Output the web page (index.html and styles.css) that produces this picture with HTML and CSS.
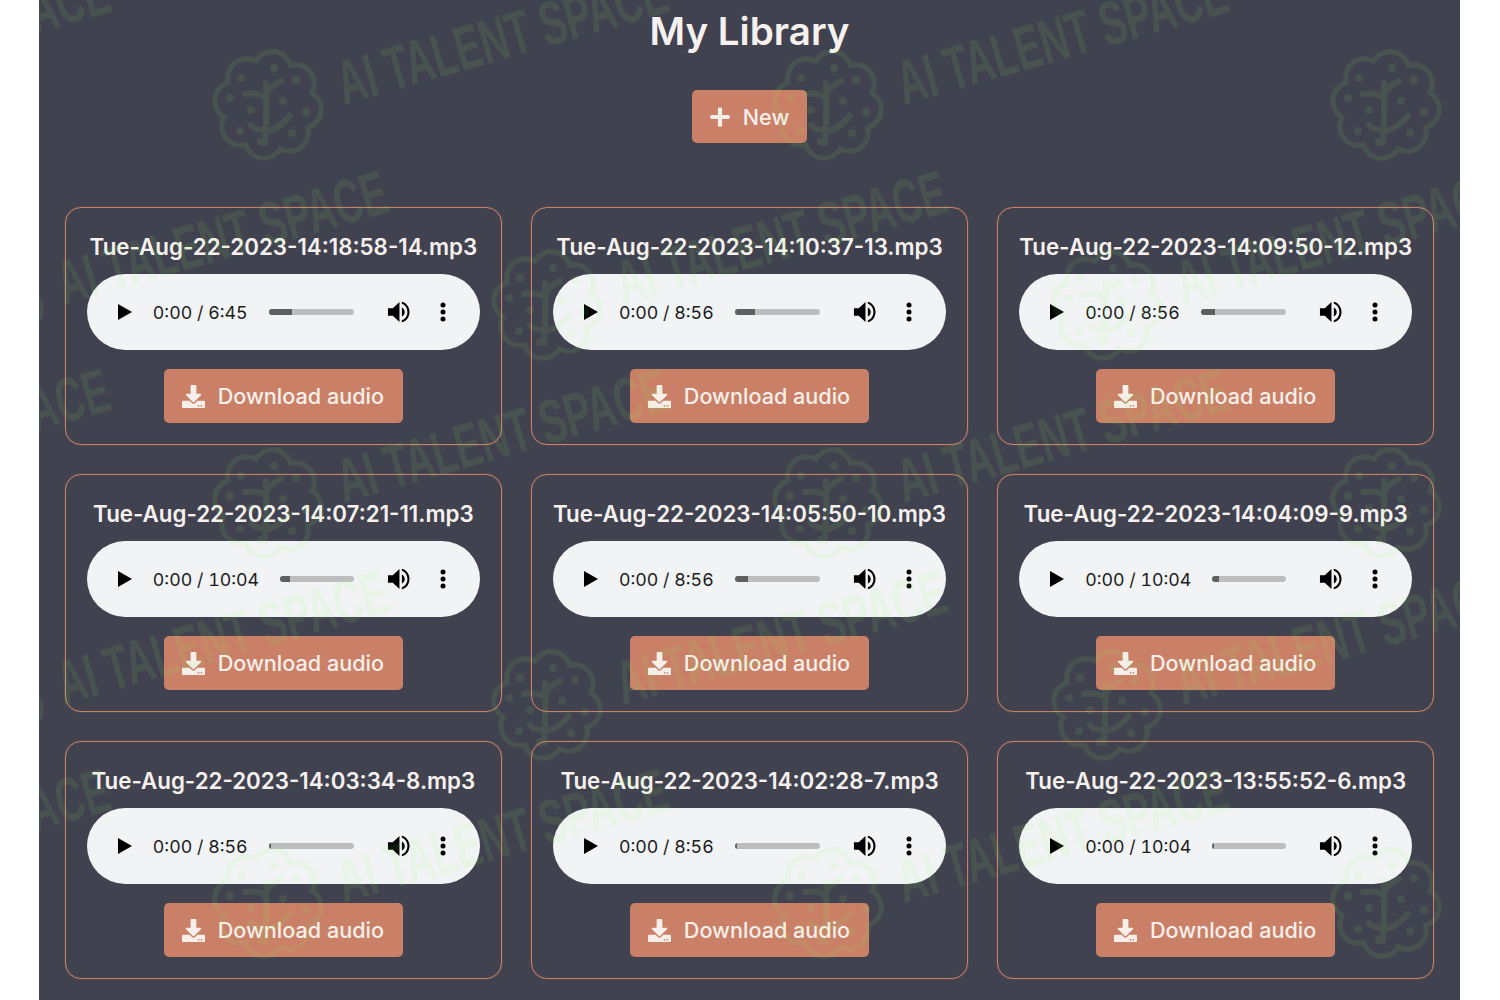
FILE: index.html
```html
<!DOCTYPE html>
<html lang="en">
  <head>
    <meta charset="UTF-8" />
    <meta name="viewport" content="width=device-width, initial-scale=1.0" />
    <title>My Library</title>
    <link rel="stylesheet" href="styles.css">
  </head>

  <body>
    <svg width="0" height="0" class="icon-defs" aria-hidden="true">
      <symbol id="i-play" viewBox="0 0 14 16"><path d="M0 0L14 8L0 16Z" /></symbol>
      <symbol id="i-volume" viewBox="0 0 24 24"><path d="M1 8H6L13 1.5V22.5L6 16H1Z" /><path d="M15.5 7.2C17.4 8.2 18.5 10 18.5 12C18.5 14 17.4 15.8 15.5 16.800Z" /><path d="M15.500 1.200C20.300 2.300 23.500 6.800 23.500 12C23.500 17.200 20.300 21.700 15.500 22.800V20.500C19 19.500 21.300 16 21.300 12C21.300 8 19 4.500 15.500 3.500Z" /></symbol>
      <symbol id="i-dots" viewBox="0 0 6 20"><circle cx="3" cy="3" r="2.500" /><circle cx="3" cy="10" r="2.500" /><circle cx="3" cy="17" r="2.500" /></symbol>
      <symbol id="i-download" viewBox="0 0 512 512"><path d="M216 0h80c13.3 0 24 10.7 24 24v168h87.700c17.800 0 26.700 21.500 14.100 34.100L269.700 378.300c-7.500 7.500-19.800 7.500-27.300 0L90.100 226.100c-12.600-12.600-3.700-34.100 14.100-34.100H192V24c0-13.300 10.700-24 24-24zm296 376v112c0 13.300-10.700 24-24 24H24c-13.300 0-24-10.700-24-24V376c0-13.300 10.700-24 24-24h146.700l49 49c20.100 20.100 52.500 20.100 72.600 0l49-49H488c13.300 0 24 10.700 24 24zm-124 88c0-11-9-20-20-20s-20 9-20 20 9 20 20 20 20-9 20-20zm64 0c0-11-9-20-20-20s-20 9-20 20 9 20 20 20 20-9 20-20z" /></symbol>
      <symbol id="i-plus" viewBox="0 0 448 512"><path d="M416 208H272V64c0-17.670-14.330-32-32-32h-32c-17.670 0-32 14.330-32 32v144H32c-17.670 0-32 14.330-32 32v32c0 17.670 14.330 32 32 32h144v144c0 17.670 14.330 32 32 32h32c17.670 0 32-14.330 32-32V304h144c17.670 0 32-14.330 32-32v-32c0-17.670-14.330-32-32-32z" /></symbol>
    </svg>

    <main class="library">
      <h1>My Library</h1>
      <button class="btn btn-new"><svg class="icon-plus"><use href="#i-plus" /></svg>New</button>

      <div class="track-grid">
        <div class="track">
          <p class="track-name">Tue-Aug-22-2023-14:18:58-14.mp3</p>
          <div class="player">
            <svg class="icon-play"><use href="#i-play" /></svg>
            <span class="time">0:00 / 6:45</span>
            <div class="bar"><div class="bar-fill" style="width: 23px"></div></div>
            <svg class="icon-volume"><use href="#i-volume" /></svg>
            <svg class="icon-dots"><use href="#i-dots" /></svg>
          </div>
          <button class="btn"><svg class="icon-download"><use href="#i-download" /></svg>Download audio</button>
        </div>
        <div class="track">
          <p class="track-name">Tue-Aug-22-2023-14:10:37-13.mp3</p>
          <div class="player">
            <svg class="icon-play"><use href="#i-play" /></svg>
            <span class="time">0:00 / 8:56</span>
            <div class="bar"><div class="bar-fill" style="width: 20px"></div></div>
            <svg class="icon-volume"><use href="#i-volume" /></svg>
            <svg class="icon-dots"><use href="#i-dots" /></svg>
          </div>
          <button class="btn"><svg class="icon-download"><use href="#i-download" /></svg>Download audio</button>
        </div>
        <div class="track">
          <p class="track-name">Tue-Aug-22-2023-14:09:50-12.mp3</p>
          <div class="player">
            <svg class="icon-play"><use href="#i-play" /></svg>
            <span class="time">0:00 / 8:56</span>
            <div class="bar"><div class="bar-fill" style="width: 14px"></div></div>
            <svg class="icon-volume"><use href="#i-volume" /></svg>
            <svg class="icon-dots"><use href="#i-dots" /></svg>
          </div>
          <button class="btn"><svg class="icon-download"><use href="#i-download" /></svg>Download audio</button>
        </div>
        <div class="track">
          <p class="track-name">Tue-Aug-22-2023-14:07:21-11.mp3</p>
          <div class="player">
            <svg class="icon-play"><use href="#i-play" /></svg>
            <span class="time">0:00 / 10:04</span>
            <div class="bar"><div class="bar-fill" style="width: 10px"></div></div>
            <svg class="icon-volume"><use href="#i-volume" /></svg>
            <svg class="icon-dots"><use href="#i-dots" /></svg>
          </div>
          <button class="btn"><svg class="icon-download"><use href="#i-download" /></svg>Download audio</button>
        </div>
        <div class="track">
          <p class="track-name">Tue-Aug-22-2023-14:05:50-10.mp3</p>
          <div class="player">
            <svg class="icon-play"><use href="#i-play" /></svg>
            <span class="time">0:00 / 8:56</span>
            <div class="bar"><div class="bar-fill" style="width: 13px"></div></div>
            <svg class="icon-volume"><use href="#i-volume" /></svg>
            <svg class="icon-dots"><use href="#i-dots" /></svg>
          </div>
          <button class="btn"><svg class="icon-download"><use href="#i-download" /></svg>Download audio</button>
        </div>
        <div class="track">
          <p class="track-name">Tue-Aug-22-2023-14:04:09-9.mp3</p>
          <div class="player">
            <svg class="icon-play"><use href="#i-play" /></svg>
            <span class="time">0:00 / 10:04</span>
            <div class="bar"><div class="bar-fill" style="width: 7px"></div></div>
            <svg class="icon-volume"><use href="#i-volume" /></svg>
            <svg class="icon-dots"><use href="#i-dots" /></svg>
          </div>
          <button class="btn"><svg class="icon-download"><use href="#i-download" /></svg>Download audio</button>
        </div>
        <div class="track">
          <p class="track-name">Tue-Aug-22-2023-14:03:34-8.mp3</p>
          <div class="player">
            <svg class="icon-play"><use href="#i-play" /></svg>
            <span class="time">0:00 / 8:56</span>
            <div class="bar"><div class="bar-fill" style="width: 2px"></div></div>
            <svg class="icon-volume"><use href="#i-volume" /></svg>
            <svg class="icon-dots"><use href="#i-dots" /></svg>
          </div>
          <button class="btn"><svg class="icon-download"><use href="#i-download" /></svg>Download audio</button>
        </div>
        <div class="track">
          <p class="track-name">Tue-Aug-22-2023-14:02:28-7.mp3</p>
          <div class="player">
            <svg class="icon-play"><use href="#i-play" /></svg>
            <span class="time">0:00 / 8:56</span>
            <div class="bar"><div class="bar-fill" style="width: 2px"></div></div>
            <svg class="icon-volume"><use href="#i-volume" /></svg>
            <svg class="icon-dots"><use href="#i-dots" /></svg>
          </div>
          <button class="btn"><svg class="icon-download"><use href="#i-download" /></svg>Download audio</button>
        </div>
        <div class="track">
          <p class="track-name">Tue-Aug-22-2023-13:55:52-6.mp3</p>
          <div class="player">
            <svg class="icon-play"><use href="#i-play" /></svg>
            <span class="time">0:00 / 10:04</span>
            <div class="bar"><div class="bar-fill" style="width: 2px"></div></div>
            <svg class="icon-volume"><use href="#i-volume" /></svg>
            <svg class="icon-dots"><use href="#i-dots" /></svg>
          </div>
          <button class="btn"><svg class="icon-download"><use href="#i-download" /></svg>Download audio</button>
        </div>
      </div>

      <!-- watermark sits over everything, staggered every other row -->
      <svg class="watermark" viewBox="39 0 1421 1000" aria-hidden="true">
        <defs>
          <g id="mark">
            <path class="mark-line" d="M22.400 -39.700A19 19 0 0 1 43.900 -12.200A19 19 0 0 1 39.700 22.400A19 19 0 0 1 12.200 43.900A19 19 0 0 1 -22.400 39.700A19 19 0 0 1 -43.900 12.200A19 19 0 0 1 -39.700 -22.400A19 19 0 0 1 -12.200 -43.900A19 19 0 0 1 22.400 -39.700Z" />
            <path class="mark-trunk" d="M-3 38C-2 20 -1 0 -2 -22M-2 -7C-8 -12 -16 -12 -23 -11M-2 -11C1 -17 6 -21 13 -24M-3 24C-8 26 -14 24 -17 20M-3 26C5 26 14 20 22 11" />
            <circle cx="-27" cy="-27" r="4" /><circle cx="6" cy="-37" r="4" /><circle cx="28" cy="-25" r="4" />
            <circle cx="-38" cy="-7" r="4" /><circle cx="15" cy="-4" r="4" /><circle cx="-17" cy="5" r="4" />
            <circle cx="38" cy="7" r="4" /><circle cx="-28" cy="26" r="4" /><circle cx="24" cy="28" r="4" />
            <circle cx="-7" cy="37" r="4" />
            <text class="mark-text" transform="translate(76 0) rotate(-16)" textLength="341" lengthAdjust="spacingAndGlyphs">AI TALENT SPACE</text>
          </g>
        </defs>
        <use href="#mark" x="-290" y="105" /><use href="#mark" x="268" y="105" /><use href="#mark" x="828" y="105" /><use href="#mark" x="1386" y="105" />
        <use href="#mark" x="-12" y="305" /><use href="#mark" x="547" y="305" /><use href="#mark" x="1107" y="305" />
        <use href="#mark" x="-290" y="503" /><use href="#mark" x="268" y="503" /><use href="#mark" x="828" y="503" /><use href="#mark" x="1386" y="503" />
        <use href="#mark" x="-12" y="705" /><use href="#mark" x="547" y="705" /><use href="#mark" x="1107" y="705" />
        <use href="#mark" x="-290" y="903" /><use href="#mark" x="268" y="903" /><use href="#mark" x="828" y="903" /><use href="#mark" x="1386" y="903" />
      </svg>
    </main>
  </body>
</html>
```

FILE: styles.css
```css
html, body {
  margin: 0;
  padding: 0;
  height: 100%;
  background: #fff;
  overflow: hidden;
  font-family: Inter, 'Liberation Sans', sans-serif;
}

.icon-defs {
  position: absolute;
}

.library {
  position: relative;
  width: 1421px;
  height: 1000px;
  margin-left: 39px;
  overflow: hidden;
  background: #41424f;
  display: flex;
  flex-direction: column;
  align-items: center;
}

.library h1 {
  margin: 7px 0 0;
  font-size: 38.600px;
  line-height: 48px;
  font-weight: 600;
  color: #f6f1ee;
}

.btn {
  display: inline-flex;
  align-items: center;
  height: 54px;
  padding: 0 19px 0 18px;
  border: none;
  border-radius: 5px;
  background-color: #c98066;
  color: #f8efeb;
  font-family: inherit;
  font-size: 21.600px;
  font-weight: 500;
  cursor: pointer;
}

.btn svg {
  fill: #f8efeb;
}

.btn-new {
  height: 53px;
  margin-top: 35px;
  padding: 0 18px;
}

.icon-plus {
  width: 20px;
  height: 22px;
  margin-right: 13px;
}

.icon-download {
  width: 23px;
  height: 23px;
  margin-right: 13px;
}

.track-grid {
  display: grid;
  grid-template-columns: repeat(3, 1fr);
  column-gap: 29.5px;
  row-gap: 29px;
  box-sizing: border-box;
  width: 100%;
  margin-top: 64px;
  padding: 0 26px;
}

.track {
  box-sizing: border-box;
  height: 238px;
  padding-top: 25px;
  border: 1px solid #c98066;
  border-radius: 16px;
  box-shadow: 0 0 1px #c98066;
  display: flex;
  flex-direction: column;
  align-items: center;
}

.track-name {
  margin: 0 0 13px;
  font-size: 22.300px;
  line-height: 28px;
  font-weight: 600;
  color: #f6f1ee;
  white-space: nowrap;
}

.player {
  box-sizing: border-box;
  width: 393px;
  height: 76px;
  margin-bottom: 19px;
  padding: 0 31px;
  border-radius: 38px;
  background: #f1f3f4;
  display: flex;
  align-items: center;
  color: #1c1c1c;
}

.icon-play {
  width: 14px;
  height: 16px;
  margin-right: 21px;
  fill: #000;
}

.time {
  font-size: 17.800px;
  font-variant-numeric: tabular-nums;
  white-space: nowrap;
}

.bar {
  flex: 1;
  height: 6px;
  margin: 0 33px 0 21px;
  border-radius: 3px;
  background: #bdbdbd;
  overflow: hidden;
}

.bar-fill {
  height: 100%;
  background: #5f5f5f;
}

.icon-volume {
  width: 23px;
  height: 24px;
  fill: #000;
}

.icon-dots {
  width: 6px;
  height: 20px;
  margin-left: 30px;
  margin-right: 3px;
  fill: #000;
}

.watermark {
  position: absolute;
  top: 0;
  left: 0;
  width: 1421px;
  height: 1000px;
  pointer-events: none;
  opacity: 0.09;
  fill: #8cff64;
}

.mark-line {
  fill: none;
  stroke: #8cff64;
  stroke-width: 5;
  stroke-linecap: round;
}

.mark-trunk {
  fill: none;
  stroke: #8cff64;
  stroke-width: 6;
  stroke-linecap: round;
}

.mark-text {
  font-family: 'Liberation Sans', sans-serif;
  font-size: 62px;
  font-weight: 700;
}
```
